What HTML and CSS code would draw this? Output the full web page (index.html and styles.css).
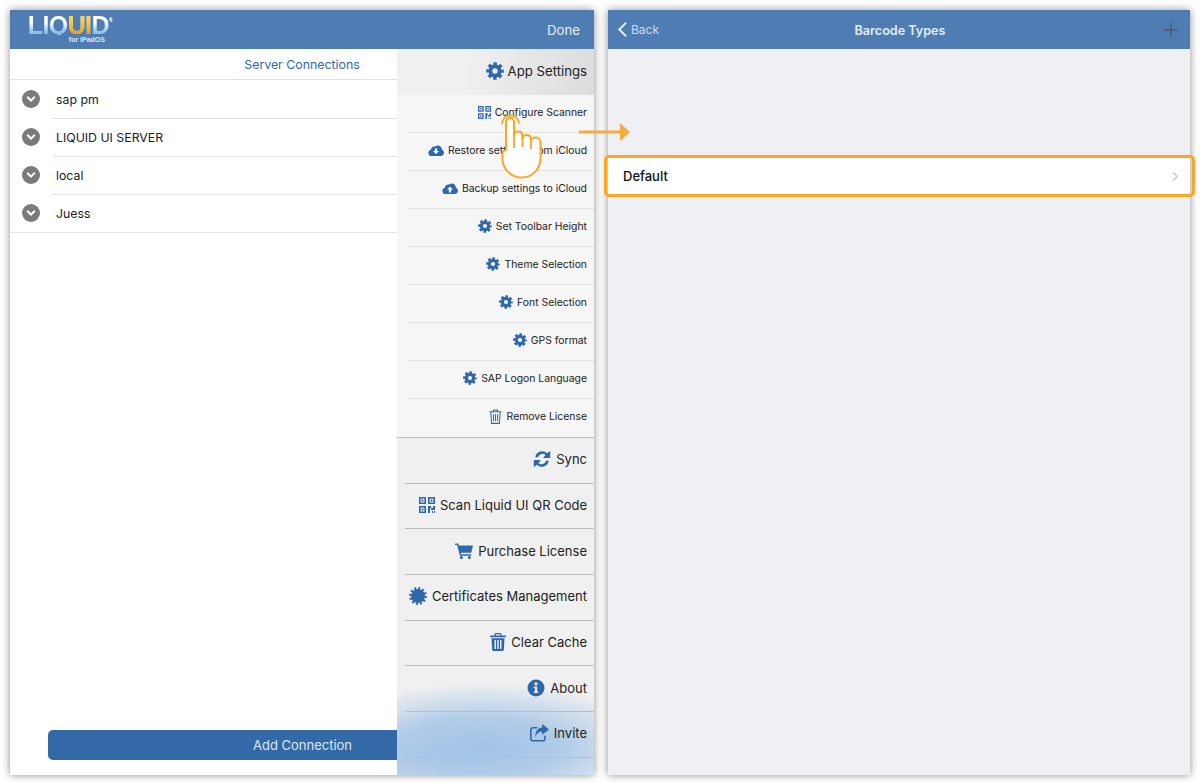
FILE: index.html
```html
<!DOCTYPE html>
<html lang="en">
<head>
<meta charset="utf-8">
<title>Barcode Types</title>
<link rel="stylesheet" href="styles.css">
</head>
<body>
<svg class="defs" width="0" height="0" aria-hidden="true">
  <symbol id="gear" viewBox="0 0 20 20">
    <circle class="fn" cx="10" cy="10" r="5.2" stroke-width="4.4"/>
    <circle class="fn" cx="10" cy="10" r="8" stroke-width="3.6" stroke-dasharray="3.6 2.68" stroke-dashoffset="1.8"/>
  </symbol>
  <symbol id="qr" viewBox="0 0 16 16">
    <path d="M0 0h7v7H0zM1.6 1.6v3.8h3.8V1.6zM9 0h7v7H9zM10.6 1.6v3.8h3.8V1.6zM0 9h7v7H0zM1.6 10.6v3.8h3.8v-3.8z" fill-rule="evenodd"/>
    <path d="M2.6 2.6h1.8v1.8H2.6zM11.6 2.6h1.8v1.8h-1.8zM2.6 11.6h1.8v1.8H2.6zM9 9h3v2h2V9h2v4h-4v-2h-1v5H9zM13 14h1v2h-1zM15 14h1v2h-1z"/>
  </symbol>
  <symbol id="cloud-down" viewBox="0 0 20 16">
    <path d="M4.5 15.5A4 4 0 0 1 3.6 7.6 4.4 4.4 0 0 1 9 3.6 5 5 0 0 1 17.3 7.4 4.2 4.2 0 0 1 15.8 15.5z"/>
    <path class="wh" d="M8.6 6h2.8v3.4h2.3L10 13.3 6.300 9.400h2.300z"/>
  </symbol>
  <symbol id="cloud-up" viewBox="0 0 20 16">
    <path d="M4.5 15.5A4 4 0 0 1 3.600 7.600 4.400 4.400 0 0 1 9 3.600 5 5 0 0 1 17.300 7.400 4.200 4.200 0 0 1 15.800 15.500z"/>
    <path class="wh" d="M8.600 13.500h2.800v-3.400h2.300L10 6.200 6.300 10.100h2.300z"/>
  </symbol>
  <symbol id="trash-line" viewBox="0 0 14 16">
    <path class="fn" stroke-width="1.1" d="M.5 3h13M2 3l.7 12.400h8.600L12 3M4.800 3V1h4.400v2M4.800 5.500v7.500M7 5.500v7.500M9.200 5.500v7.500"/>
  </symbol>
  <symbol id="trash" viewBox="0 0 14 16">
    <path fill-rule="evenodd" d="M0 2.300h3.800V.9L4.700 0h4.600l.9.900v1.400H14v1.500H0zM5 1.100v1.200h4V1.100zM1.200 4.700h11.600l-.6 10.300-.9 1H2.700l-.9-1zM3.900 6.200v8h1.300v-8zM6.350 6.200v8h1.300v-8zM8.800 6.200v8h1.300v-8z"/>
  </symbol>
  <symbol id="sync" viewBox="0 0 18 18">
    <path d="M2.300 7.300A7 7 0 0 1 14.200 3.300L16.200 1.400a.6.6 0 0 1 1 .4V8H11a.6.6 0 0 1-.4-1l2-2A4.700 4.700 0 0 0 5 7.300zM15.700 10.700A7 7 0 0 1 3.800 14.700L1.800 16.600a.6.6 0 0 1-1-.4V10H7a.6.6 0 0 1 .4 1l-2 2A4.700 4.700 0 0 0 13 10.700z"/>
  </symbol>
  <symbol id="cart" viewBox="0 0 18 16">
    <path d="M0 .5h3.200l.6 2H18l-1.700 7.200H5.700l.4 1.500h10v1.500H4.900L2.100 2H0z"/>
    <circle cx="6.300" cy="14.400" r="1.500"/><circle cx="14.400" cy="14.400" r="1.500"/>
  </symbol>
  <symbol id="badge" viewBox="0 0 20 20">
    <circle cx="10" cy="10" r="7.800"/>
    <circle class="fn" cx="10" cy="10" r="8.600" stroke-width="2.600" stroke-dasharray="2.250 2.250"/>
  </symbol>
  <symbol id="info" viewBox="0 0 18 18">
    <path fill-rule="evenodd" d="M9 .5a8.500 8.500 0 1 1 0 17 8.500 8.500 0 0 1 0-17zM7.600 3.400v2.800h2.800V3.400zM6.800 7.400v1.500h1v3.700h-1v1.500h4.400v-1.500h-1V7.400z"/>
  </symbol>
  <symbol id="share" viewBox="0 0 18 17">
    <path class="fn" stroke-width="1.500" d="M7 3.500H3a2.200 2.200 0 0 0-2.200 2.200v8a2.200 2.200 0 0 0 2.200 2.200h9a2.200 2.200 0 0 0 2.200-2.200v-2.500"/>
    <path d="M11.500 0L18 5.200l-6.500 5V7.300C8.500 7.300 6.300 8.500 5.200 12.500 4.800 7.500 6.800 3.800 11.500 3.300z"/>
  </symbol>
</svg>

<main class="page">
  <section class="panel">
    <header class="bar">
      <div class="logo">
        <div class="logo-word">LIQ<span class="logo-ui">UI</span>D<sup class="logo-reg">®</sup></div>
        <div class="logo-sub">for iPadOS</div>
      </div>
      <span class="bar-done">Done</span>
    </header>
    <div class="conn-title">Server Connections</div>
    <ul class="conn-list">
      <li class="conn-row"><span class="conn-toggle"><svg viewBox="0 0 10 8" width="10" height="8"><path d="M1.200 1.800L5 5.600l3.800-3.800"/></svg></span><span class="conn-name">sap pm</span></li>
      <li class="conn-row"><span class="conn-toggle"><svg viewBox="0 0 10 8" width="10" height="8"><path d="M1.200 1.800L5 5.600l3.800-3.800"/></svg></span><span class="conn-name">LIQUID UI SERVER</span></li>
      <li class="conn-row"><span class="conn-toggle"><svg viewBox="0 0 10 8" width="10" height="8"><path d="M1.200 1.800L5 5.600l3.800-3.800"/></svg></span><span class="conn-name">local</span></li>
      <li class="conn-row conn-last"><span class="conn-toggle"><svg viewBox="0 0 10 8" width="10" height="8"><path d="M1.200 1.800L5 5.600l3.800-3.800"/></svg></span><span class="conn-name">Juess</span></li>
    </ul>
    <div class="add-wrap"><button class="add-btn">Add Connection</button></div>

    <nav class="menu">
      <div class="m-head"><svg class="i i17"><use href="#gear"/></svg>App Settings</div>
      <div class="m-group">
        <div class="m-sm"><svg class="i i13"><use href="#qr"/></svg>Configure Scanner</div>
        <div class="m-sm"><svg class="i i16"><use href="#cloud-down"/></svg>Restore settings from iCloud</div>
        <div class="m-sm"><svg class="i i16"><use href="#cloud-up"/></svg>Backup settings to iCloud</div>
        <div class="m-sm"><svg class="i i14"><use href="#gear"/></svg>Set Toolbar Height</div>
        <div class="m-sm"><svg class="i i14"><use href="#gear"/></svg>Theme Selection</div>
        <div class="m-sm"><svg class="i i14"><use href="#gear"/></svg>Font Selection</div>
        <div class="m-sm"><svg class="i i14"><use href="#gear"/></svg>GPS format</div>
        <div class="m-sm"><svg class="i i14"><use href="#gear"/></svg>SAP Logon Language</div>
        <div class="m-sm m-sm-last"><svg class="i i-trash-sm"><use href="#trash-line"/></svg>Remove License</div>
      </div>
      <div class="m-bottom">
        <div class="m-lg"><svg class="i i17"><use href="#sync"/></svg>Sync</div>
        <div class="m-lg"><svg class="i i16"><use href="#qr"/></svg>Scan Liquid UI QR Code</div>
        <div class="m-lg"><svg class="i i17"><use href="#cart"/></svg>Purchase License</div>
        <div class="m-lg"><svg class="i i17"><use href="#badge"/></svg>Certificates Management</div>
        <div class="m-lg"><svg class="i i-trash-lg"><use href="#trash"/></svg>Clear Cache</div>
        <div class="m-lg"><svg class="i i17"><use href="#info"/></svg>About</div>
        <div class="m-lg"><svg class="i i18"><use href="#share"/></svg>Invite</div>
      </div>
    </nav>
  </section>

  <section class="panel panel-right">
    <header class="bar bar-r">
      <span class="back"><svg viewBox="0 0 12 18" width="11" height="17"><path d="M10 1.500L2.500 9l7.500 7.500"/></svg>Back</span>
      <span class="bar-title">Barcode Types</span>
      <svg class="plus" viewBox="0 0 14 14" width="14" height="14"><path d="M7 0v14M0 7h14"/></svg>
    </header>
    <div class="type-row">
      <span>Default</span>
      <svg viewBox="0 0 8 12" width="7" height="11"><path d="M1 1l5 5-5 5"/></svg>
    </div>
  </section>

  <svg class="arrow" viewBox="0 0 52 20" width="52" height="20"><path class="arrow-line" d="M0 10h42"/><path class="arrow-head" d="M41 1l10 9-10 9z"/></svg>
  <svg class="hand" viewBox="0 0 44 68" width="44" height="68">
    <path class="hand-ring" d="M1 12.500A8.500 8.500 0 0 1 18 11.500"/>
    <path class="hand-body" d="M5 38V10a4 4 0 0 1 8 0V23.500a4.300 4.300 0 0 1 8.500-.5V27a4.300 4.300 0 0 1 8.500-.5V30a4.700 4.700 0 0 1 9.500 .5V46c0 11-8 19.500-19 19.500C10.500 65.500 1.500 57 1.500 47V41.500c0-1.500 1.500-3.500 3.500-3.500z"/>
    <path class="hand-line" d="M13 23v13M21.500 23v12M30 27v10"/>
  </svg>
</main>
</body>
</html>
```
FILE: styles.css
```css
* { box-sizing: border-box; }
html, body { margin: 0; padding: 0; height: 783px; overflow: hidden; background: #fff; }
body { font-family: Inter, "Liberation Sans", sans-serif; color: #222; }
.defs { position: absolute; }
ul { list-style: none; margin: 0; padding: 0; }

.page { position: relative; display: flex; gap: 14px; height: 783px; padding: 10px 10px 8px; }
.panel { position: relative; flex: 0 0 584px; display: flex; flex-direction: column; background: #fff; box-shadow: 0 0 8px rgba(0,0,0,.45); }
.panel-right { flex: 0 0 582px; background: #efeff4; }

.bar { flex: 0 0 39px; display: flex; align-items: center; justify-content: space-between; background: #4f7db3; padding: 0 14px 0 18px; color: #e4ecf5; }
.bar-done { font-size: 13.200px; }
.logo { display: flex; flex-direction: column; align-items: flex-end; width: 84px; margin-top: -1px; }
.logo-word { font: 700 25px/20px "Liberation Sans", sans-serif; letter-spacing: -.6px; color: #dcebf8; background: linear-gradient(#fff 35%, #8dc3ea 85%); -webkit-background-clip: text; background-clip: text; -webkit-text-fill-color: transparent; position: relative; white-space: nowrap; }
.logo-ui { background: linear-gradient(#ffd23f 30%, #eb9d13 85%); -webkit-background-clip: text; background-clip: text; }
.logo-reg { font-size: 5px; line-height: 0; vertical-align: 12px; -webkit-text-fill-color: #e4ecf5; }
.logo-sub { font: 700 7px/8px "Liberation Sans", sans-serif; color: #dfe8f2; margin: 1px 7px 0 0; }

.conn-title { flex: 0 0 31px; display: flex; align-items: center; justify-content: center; font-size: 12.350px; color: #2f69ac; border-bottom: 1px solid #e0e0e0; }
.conn-row { position: relative; height: 38px; display: flex; align-items: center; padding-left: 12px; }
.conn-row::after { content: ""; position: absolute; left: 42px; right: 0; bottom: -1px; height: 1px; background: #e3e3e3; }
.conn-last::after { left: 0; }
.conn-toggle { flex: 0 0 18px; height: 18px; border-radius: 50%; background: #7a7a7a; display: flex; align-items: center; justify-content: center; }
.conn-toggle svg { fill: none; stroke: #fff; stroke-width: 2; }
.conn-name { margin-left: 16px; font-size: 12.300px; color: #222; }

.add-wrap { margin-top: auto; padding: 0 37px 15px 38px; }
.add-btn { display: block; width: 100%; height: 30px; border: 0; border-radius: 5px; background: #3469a8; color: #dfe8f2; font: 13px Inter, "Liberation Sans", sans-serif; }

.menu { position: absolute; top: 39px; right: 0; bottom: 0; width: 197px; display: flex; flex-direction: column; background: #f0f0f0; }
.i { flex: none; fill: #2f68aa; stroke: #2f68aa; stroke-width: 0; margin-right: 4px; }
.i .fn, .fn { fill: none; }
.wh { fill: #f6f6f6; }
.i13 { width: 13px; height: 13px; }
.i14 { width: 14px; height: 14px; }
.i16 { width: 16px; height: 16px; }
.i17 { width: 18px; height: 18px; }
.i18 { width: 19px; height: 18px; }
.i-trash-sm { width: 13px; height: 15px; margin-right: 5px; }
.i-trash-lg { width: 16px; height: 18px; margin-right: 5px; }
.m-head, .m-sm, .m-lg { display: flex; align-items: center; justify-content: flex-end; padding-right: 7px; white-space: nowrap; }
.m-head { flex: 0 0 46px; padding-bottom: 3px; font-size: 13.200px; background: linear-gradient(100deg, #f0f0f0 35%, #dcdcdc 100%); }
.m-group { background: #f6f6f6; border-bottom: 1px solid #bdbdbd; }
.m-sm { position: relative; height: 38px; padding-bottom: 4px; font-size: 10.400px; }
.m-sm::after { content: ""; position: absolute; left: 11px; right: 0; bottom: 0; height: 1px; background: #e4e4e4; }
.m-sm-last::after { display: none; }
.m-bottom { flex: 1; background:
  radial-gradient(ellipse 175px 62px at 44% 91%, rgba(160,194,230,.95) 0%, rgba(165,197,231,.8) 45%, rgba(170,200,232,0) 100%),
  radial-gradient(ellipse 200px 45px at 20% 95%, rgba(170,200,232,.75), rgba(170,200,232,0)),
  #f0f0f0; }
.m-lg { position: relative; height: 45.700px; padding-bottom: 3px; font-size: 13px; }
.m-lg .i { margin-right: 5px; }
.m-lg::after { content: ""; position: absolute; left: 8px; right: 0; bottom: 0; height: 1px; background: #bdbdbd; }

.bar-r { position: relative; padding: 0 12px 0 9px; }
.back { display: flex; align-items: center; gap: 3px; font-size: 12px; color: #c9d8ea; }
.back svg { fill: none; stroke: #e6eef7; stroke-width: 2.200; }
.bar-title { position: absolute; left: 0; right: 0; padding: 2px 0 0 2px; text-align: center; font-size: 12.600px; font-weight: 600; color: #e4ecf5; }
.plus { fill: none; stroke: #4c5c72; stroke-width: 1.500; }

.type-row { position: relative; margin-top: 108px; height: 37px; flex: none; display: flex; align-items: center; justify-content: space-between; padding: 1px 11px 0 15px; background: #fff; font-size: 13px; font-weight: 500; color: #111; }
.type-row svg { fill: none; stroke: #c4c4c9; stroke-width: 1.500; }
.type-row::after { content: ""; position: absolute; inset: -2px -5px -3px -4px; border: 3px solid #f9a825; border-radius: 5px; }

.arrow { position: absolute; left: 579px; top: 122px; }
.arrow-line { fill: none; stroke: #f5ab3d; stroke-width: 3; }
.arrow-head { fill: #f5ab3d; }
.hand { position: absolute; left: 501px; top: 112px; }
.hand-ring { fill: none; stroke: #f9a825; stroke-width: 1.800; }
.hand-body { fill: #fff; stroke: #f9a825; stroke-width: 2; stroke-linejoin: round; }
.hand-line { fill: none; stroke: #f9a825; stroke-width: 1.800; }
```
